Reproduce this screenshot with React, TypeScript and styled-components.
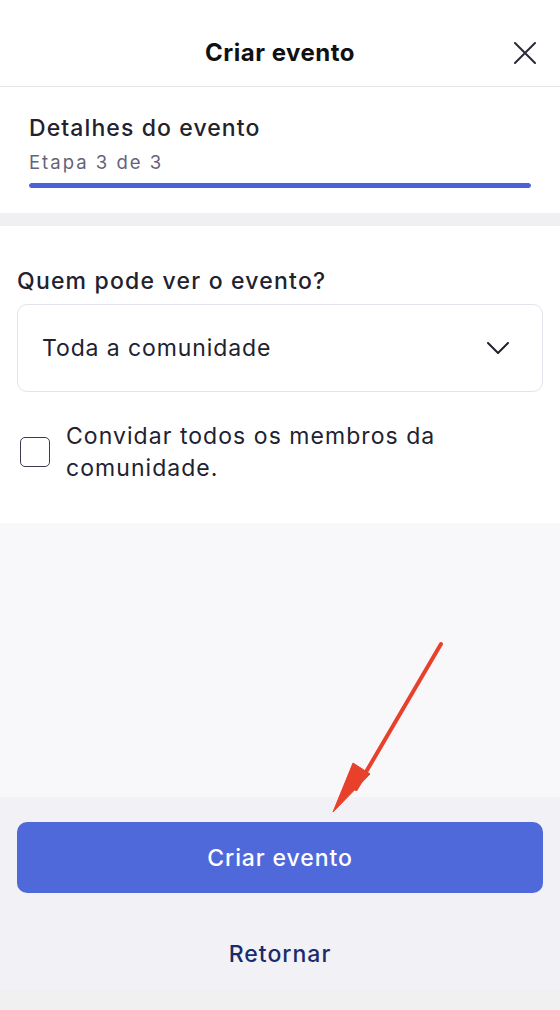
import React from 'react';
import styled, { createGlobalStyle } from 'styled-components';

const GlobalStyle = createGlobalStyle`
  html, body { margin: 0; padding: 0; }
  body {
    font-family: Inter, "Noto Sans", "Liberation Sans", sans-serif;
    background: #f0f0f0;
    color: #22222f;
  }
`;

const App = () => {
  return (
    <>
      <GlobalStyle />
      <Page>
        <Header>
          <Title>Criar evento</Title>
          <CloseButton aria-label="Fechar">
            <svg width="22" height="22" viewBox="0 0 22 22" fill="none">
              <path d="M1 1L21 21M21 1L1 21" stroke="#2a2a38" strokeWidth="2" strokeLinecap="round" />
            </svg>
          </CloseButton>
        </Header>

        <StepSection>
          <StepTitle>Detalhes do evento</StepTitle>
          <StepCount>Etapa 3 de 3</StepCount>
          <ProgressTrack>
            <ProgressFill style={{ width: `${(3 / 3) * 100}%` }} />
          </ProgressTrack>
        </StepSection>

        <FormSection>
          <FieldLabel>Quem pode ver o evento?</FieldLabel>
          <Select>
            <span>Toda a comunidade</span>
            <svg width="22" height="12" viewBox="0 0 22 12" fill="none">
              <path d="M1 1L11 11L21 1" stroke="#22222f" strokeWidth="2" strokeLinecap="round" strokeLinejoin="round" />
            </svg>
          </Select>
          <CheckRow>
            <CheckBox />
            <CheckText>Convidar todos os membros da comunidade.</CheckText>
          </CheckRow>
        </FormSection>

        <Spacer />

        <Footer>
          <PrimaryButton>Criar evento</PrimaryButton>
          <LinkButton>Retornar</LinkButton>
        </Footer>
        <BottomStrip />

        <Arrow width="560" height="200" viewBox="0 620 560 200">
          <path d="M441 644L356 789" stroke="#e8412b" strokeWidth="4" strokeLinecap="round" />
          <path d="M333 812L353 763L370 774Z" fill="#e8412b" stroke="#e8412b" strokeWidth="1" strokeLinejoin="round" />
        </Arrow>
      </Page>
    </>
  );
};

export default App;

const Page = styled.div`
  position: relative;
  width: 560px;
  height: 1010px;
  display: flex;
  flex-direction: column;
  background: #f8f8fa;
  overflow: hidden;
`;

const Header = styled.header`
  height: 86px;
  flex-shrink: 0;
  display: flex;
  align-items: center;
  justify-content: center;
  position: relative;
  background: #fff;
  border-bottom: 1px solid #e6e6ea;
`;

const Title = styled.h1`
  margin: 0;
  font-size: 24px;
  font-weight: 700;
  letter-spacing: 0.5px;
  line-height: 30px;
  color: #111;
  padding-top: 19px;
`;

const CloseButton = styled.button`
  position: absolute;
  right: 24px;
  top: 42px;
  padding: 0;
  border: 0;
  background: none;
  display: flex;
`;

const StepSection = styled.section`
  background: #fff;
  padding: 26px 29px 25px;
  border-bottom: 13px solid #f0f0f2;
`;

const StepTitle = styled.div`
  font-size: 23px;
  font-weight: 500;
  letter-spacing: 1.1px;
  color: #22222f;
  line-height: 30px;
`;

const StepCount = styled.div`
  font-size: 18.5px;
  letter-spacing: 2px;
  color: #646478;
  line-height: 26px;
  margin-top: 6px;
`;

const ProgressTrack = styled.div`
  margin-top: 8px;
  height: 5px;
  border-radius: 3px;
  background: #e4e6f5;
  overflow: hidden;
`;

const ProgressFill = styled.div`
  height: 100%;
  border-radius: 3px;
  background: #4c62d8;
`;

const FormSection = styled.section`
  background: #fff;
  padding: 40px 17px 39px;
  display: flex;
  flex-direction: column;
`;

const FieldLabel = styled.label`
  font-size: 23px;
  font-weight: 500;
  letter-spacing: 1.2px;
  color: #22222f;
  line-height: 30px;
`;

const Select = styled.div`
  margin-top: 8px;
  height: 88px;
  box-sizing: border-box;
  border: 1px solid #e3e3ec;
  border-radius: 10px;
  display: flex;
  align-items: center;
  justify-content: space-between;
  padding: 0 33px 0 24px;
  font-size: 23px;
  letter-spacing: 0.9px;
  color: #22222f;
`;

const CheckRow = styled.div`
  margin-top: 28px;
  display: flex;
  align-items: center;
  gap: 16px;
  padding-left: 3px;
`;

const CheckBox = styled.span`
  width: 30px;
  height: 30px;
  box-sizing: border-box;
  flex-shrink: 0;
  border: 1.5px solid #3b3b55;
  border-radius: 5px;
  background: #fff;
`;

const CheckText = styled.span`
  font-size: 23px;
  letter-spacing: 1.05px;
  line-height: 32px;
  color: #22222f;
  max-width: 400px;
`;

const Spacer = styled.div`
  flex: 1;
  background: #f8f8fa;
`;

const Footer = styled.footer`
  flex-shrink: 0;
  background: #f2f2f6;
  padding: 25px 17px 0;
  height: 193px;
  box-sizing: border-box;
  display: flex;
  flex-direction: column;
  align-items: stretch;
`;

const PrimaryButton = styled.button`
  height: 71px;
  border: 0;
  border-radius: 10px;
  background: #4f69db;
  color: #fff;
  font-family: inherit;
  font-size: 23px;
  font-weight: 500;
  letter-spacing: 0.9px;
`;

const LinkButton = styled.button`
  margin-top: 46px;
  padding: 0;
  line-height: 30px;
  border: 0;
  background: none;
  color: #1a2a6a;
  font-family: inherit;
  font-size: 23px;
  font-weight: 500;
  letter-spacing: 1px;
`;

const BottomStrip = styled.div`
  height: 20px;
  flex-shrink: 0;
  background: #f0f0f0;
`;

const Arrow = styled.svg`
  position: absolute;
  left: 0;
  top: 620px;
  pointer-events: none;
`;
